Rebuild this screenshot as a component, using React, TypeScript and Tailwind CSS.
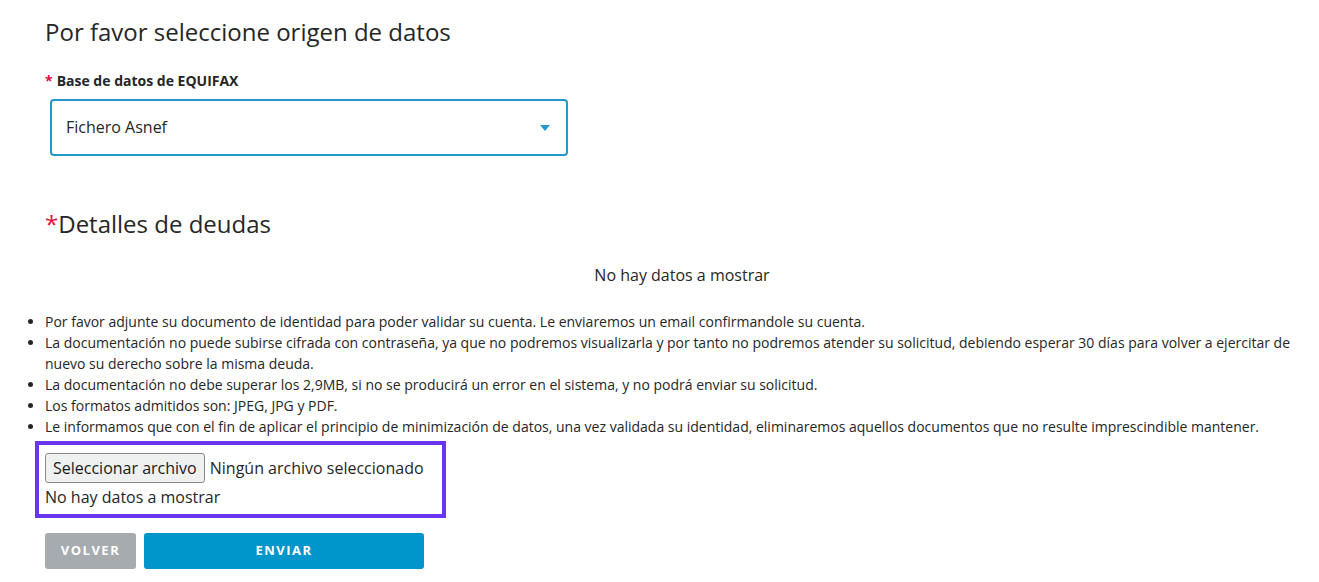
import { useState } from 'react'

const notes = [
  'Por favor adjunte su documento de identidad para poder validar su cuenta. Le enviaremos un email confirmandole su cuenta.',
  'La documentación no puede subirse cifrada con contraseña, ya que no podremos visualizarla y por tanto no podremos atender su solicitud, debiendo esperar 30 días para volver a ejercitar de nuevo su derecho sobre la misma deuda.',
  'La documentación no debe superar los 2,9MB, si no se producirá un error en el sistema, y no podrá enviar su solicitud.',
  'Los formatos admitidos son: JPEG, JPG y PDF.',
  'Le informamos que con el fin de aplicar el principio de minimización de datos, una vez validada su identidad, eliminaremos aquellos documentos que no resulte imprescindible mantener.',
]

export default function App() {
  const [source, setSource] = useState('Fichero Asnef')

  return (
    <div className="min-h-[582px] w-[1319px] bg-white text-[#262626] font-['Open_Sans',sans-serif]">
      <div className="pl-[45px] pt-[15px]">
        <h2 className="text-[24px] leading-[34px] font-normal">Por favor seleccione origen de datos</h2>

        <label className="mt-[23px] block text-[14px] leading-[18px] font-bold">
          <span className="text-[#e0103a] mr-1">*</span>Base de datos de EQUIFAX
        </label>

        <div className="relative mt-[9px] ml-[5px] w-[518px] h-[57px] border-2 border-[#2497cf] rounded-[4px] flex items-center">
          <select
            value={source}
            onChange={e => setSource(e.target.value)}
            className="appearance-none w-full h-full bg-transparent pl-[14px] pr-10 pb-[1px] text-[16px] text-[#262626] outline-none"
          >
            <option>Fichero Asnef</option>
            <option>Fichero Badexcug</option>
          </select>
          <svg className="absolute right-[16px] top-1/2 -translate-y-1/2 w-[10px] h-[6px] pointer-events-none" viewBox="0 0 10 6">
            <path d="M0 0h10L5 6z" fill="#2497cf" />
          </svg>
        </div>

        <h2 className="mt-[51px] text-[24px] leading-[34px] font-normal">
          <span className="text-[#e0103a]">*</span>Detalles de deudas
        </h2>

        <p className="mt-[23px] text-center text-[16px] leading-[22px]">No hay datos a mostrar</p>
      </div>

      <ul className="mt-[25px] list-disc pl-[45px] pr-[20px] text-[14px] leading-[21px] text-[#262626]">
        {notes.map((n, i) => (
          <li key={i}>{n}</li>
        ))}
      </ul>

      <div className="ml-[35px] mt-[4px] w-[411px] border-4 border-[#6a35ee] px-[6px] pt-[8px] pb-[6px]">
        <div className="flex items-center gap-[5px] text-[16px] leading-[22px]">
          <button className="h-[30px] px-[7px] bg-[#eff0f0] border border-[#8a8a8a] rounded-[3px] text-[#1a1a1a] text-[16px]">
            Seleccionar archivo
          </button>
          <span>Ningún archivo seleccionado</span>
        </div>
        <p className="mt-[3px] text-[16px] leading-[22px]">No hay datos a mostrar</p>
      </div>

      <div className="ml-[45px] mt-[15px] flex gap-[8px]">
        <button className="w-[91px] h-[36px] rounded-[3px] bg-[#a6abaf] text-white text-[13px] font-bold tracking-[1.5px]">
          VOLVER
        </button>
        <button className="w-[280px] h-[36px] rounded-[3px] bg-[#0096cc] text-white text-[13px] font-bold tracking-[1.5px]">
          ENVIAR
        </button>
      </div>
    </div>
  )
}
